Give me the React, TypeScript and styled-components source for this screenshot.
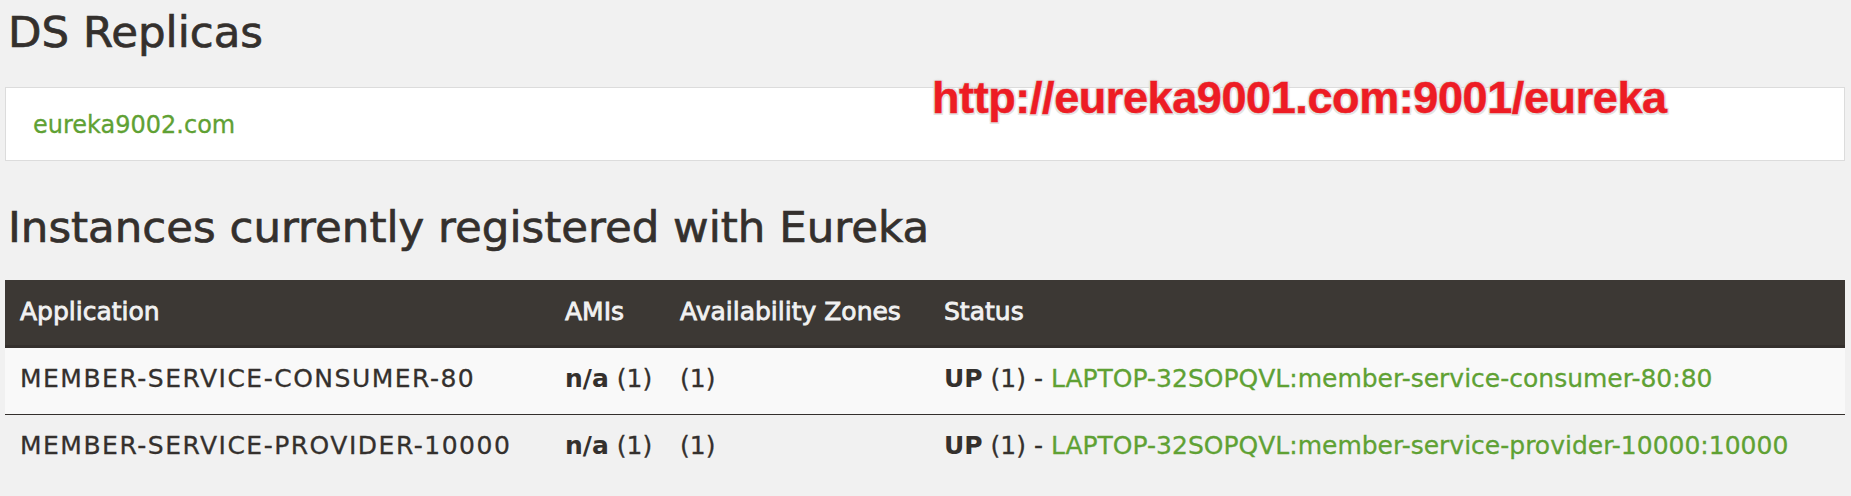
import styled, { createGlobalStyle } from 'styled-components';

interface Instance {
  name: string;
  ami: string;
  zones: string;
  status: string;
  host: string;
}

const instances: Instance[] = [
  {
    name: 'MEMBER-SERVICE-CONSUMER-80',
    ami: 'n/a',
    zones: '(1)',
    status: 'UP',
    host: 'LAPTOP-32SOPQVL:member-service-consumer-80:80',
  },
  {
    name: 'MEMBER-SERVICE-PROVIDER-10000',
    ami: 'n/a',
    zones: '(1)',
    status: 'UP',
    host: 'LAPTOP-32SOPQVL:member-service-provider-10000:10000',
  },
];

const columns = [
  { title: 'Application', width: 545 },
  { title: 'AMIs', width: 115 },
  { title: 'Availability Zones', width: 264 },
  { title: 'Status', width: 916 },
];

const App: React.FC = () => {
  return (
    <Page>
      <GlobalStyle />
      <Title>DS Replicas</Title>
      <ReplicaBox>
        <ReplicaLink href="#">eureka9002.com</ReplicaLink>
      </ReplicaBox>
      <SubTitle>Instances currently registered with Eureka</SubTitle>
      <Table>
        <colgroup>
          {columns.map((col) => (
            <Col key={col.title} $width={col.width} />
          ))}
        </colgroup>
        <thead>
          <tr>
            {columns.map((col) => (
              <Th key={col.title}>{col.title}</Th>
            ))}
          </tr>
        </thead>
        <tbody>
          {instances.map((item) => (
            <Row key={item.name}>
              <AppCell>{item.name}</AppCell>
              <Td>
                <Strong>{item.ami}</Strong> (1)
              </Td>
              <Td>{item.zones}</Td>
              <Td>
                <Strong>{item.status}</Strong> (1) - <HostLink href="#">{item.host}</HostLink>
              </Td>
            </Row>
          ))}
        </tbody>
      </Table>
      <Annotation>http://eureka9001.com:9001/eureka</Annotation>
    </Page>
  );
};

const GlobalStyle = createGlobalStyle`
  html, body {
    margin: 0;
    padding: 0;
    background: #f1f1f1;
  }
  body {
    font-family: "DejaVu Sans", "Noto Sans", sans-serif;
    color: #34302d;
  }
`;

const Page = styled.div`
  position: relative;
  padding: 6px 6px 0 5px;
  width: 1851px;
  height: 496px;
  box-sizing: border-box;
  overflow: hidden;
`;

const Title = styled.h1`
  margin: 0 0 29px 3px;
  font-size: 43.5px;
  font-weight: normal;
  line-height: 52px;
  color: #34302d;
  -webkit-text-stroke: 0.7px #34302d;
`;

const SubTitle = styled(Title).attrs({ as: 'h2' })`
  margin: 40px 0 27px 3px;
`;

const ReplicaBox = styled.div`
  height: 72px;
  background: #fff;
  border: 1px solid #dcdcdc;
  padding: 0 27px;
  display: flex;
  align-items: center;
`;

const ReplicaLink = styled.a`
  font-size: 24px;
  line-height: 30px;
  color: #5fa134;
  text-decoration: none;
  margin-top: 2px;
  -webkit-text-stroke: 0.3px #5fa134;
`;

const Table = styled.table`
  width: 1840px;
  table-layout: fixed;
  border-collapse: collapse;
  border-spacing: 0;
`;

const Col = styled.col<{ $width: number }>`
  width: ${(p) => p.$width}px;
`;

const Th = styled.th`
  background: #3c3834;
  color: #f1f1f1;
  border-bottom: 3px solid #34302d;
  padding: 17px 15px 18px;
  font-size: 25px;
  line-height: 30px;
  font-weight: normal;
  -webkit-text-stroke: 0.8px #f1f1f1;
  text-align: left;
  white-space: nowrap;
`;

const Row = styled.tr`
  &:nth-child(odd) {
    background: #f9f9f9;
  }
  & + & td {
    border-top: 1px solid #34302d;
  }
`;

const Td = styled.td`
  padding: 16px 15px 20px;
  font-size: 25px;
  line-height: 30px;
  color: #34302d;
  white-space: nowrap;
  overflow: hidden;
  -webkit-text-stroke: 0.3px currentColor;
`;

const AppCell = styled(Td)`
  letter-spacing: 1.5px;
`;

const Strong = styled.b`
  font-weight: bold;
  -webkit-text-stroke: 0;
`;

const HostLink = styled.a`
  color: #5fa134;
  text-decoration: none;
`;

const Annotation = styled.div`
  position: absolute;
  top: 75px;
  left: 932px;
  font-family: "Liberation Sans", Arial, sans-serif;
  font-weight: bold;
  font-size: 45px;
  line-height: 45px;
  letter-spacing: -0.4px;
  color: #ed1c24;
  white-space: nowrap;
  -webkit-text-stroke: 0.5px #ed1c24;
  text-shadow:
    1.5px 1.5px 0 #e4e4e4,
    -1.5px -1.5px 0 #e4e4e4,
    1.5px -1.5px 0 #e4e4e4,
    -1.5px 1.5px 0 #e4e4e4,
    0 0 3px #c4c4c4;
`;

export default App;
